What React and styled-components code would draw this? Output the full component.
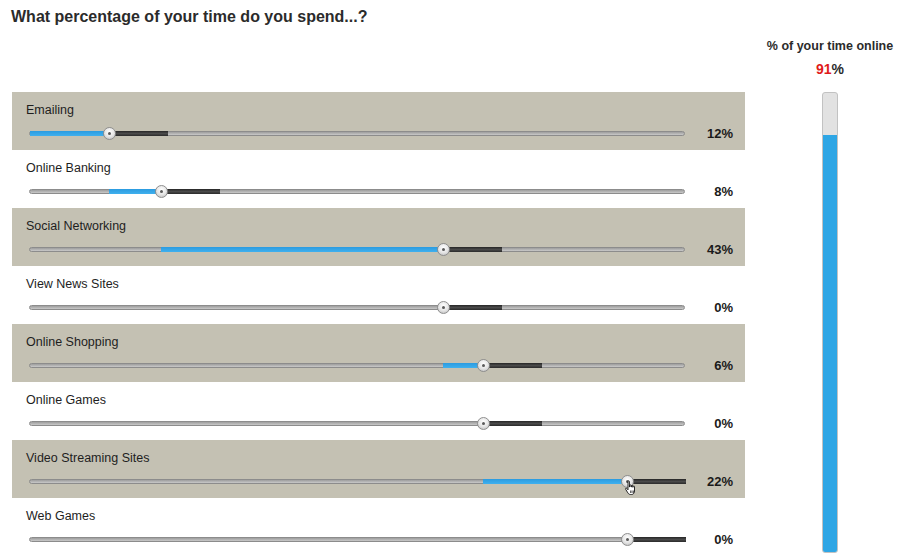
import React from 'react';
import styled, { createGlobalStyle } from 'styled-components';

const GlobalStyle = createGlobalStyle`
  body {
    margin: 0;
    background: #fff;
    font-family: "Liberation Sans", Arial, sans-serif;
    color: #222;
  }
`;

const TRACK = 656;
const SPARE = 9;

const activities = [
  { label: 'Emailing', value: 12 },
  { label: 'Online Banking', value: 8 },
  { label: 'Social Networking', value: 43 },
  { label: 'View News Sites', value: 0 },
  { label: 'Online Shopping', value: 6 },
  { label: 'Online Games', value: 0 },
  { label: 'Video Streaming Sites', value: 22, cursor: true },
  { label: 'Web Games', value: 0 },
];

const Page = styled.div`
  display: flex;
  width: 900px;
  height: 556px;
  overflow: hidden;
`;

const Main = styled.div`
  width: 733px;
  margin-left: 12px;
`;

const Title = styled.h1`
  margin: 0 0 0 -1px;
  height: 92px;
  padding-top: 8px;
  box-sizing: border-box;
  font-size: 16px;
  line-height: 18px;
  font-weight: bold;
  color: #2b2b2b;
`;

const Row = styled.div`
  height: 58px;
  box-sizing: border-box;
  padding: 10px 12px 0 14px;
  background: ${(p) => (p.$shaded ? '#c4c1b3' : '#fff')};
`;

const Label = styled.div`
  font-size: 12.5px;
  line-height: 16px;
  color: #1e1e1e;
`;

const SliderLine = styled.div`
  display: flex;
  align-items: center;
  margin-top: 7px;
  margin-left: 3px;
  height: 16px;
`;

const Track = styled.div`
  position: relative;
  width: ${TRACK}px;
  height: 5px;
  border-radius: 3px;
  box-sizing: border-box;
  border: 1px solid #8c8c8c;
  background: linear-gradient(#9d9d9d, #c9c9c9);
`;

const Segment = styled.div`
  position: absolute;
  top: -1px;
  height: 5px;
  background: ${(p) =>
    p.$kind === 'fill'
      ? 'linear-gradient(#2b9be0, #3fb0ee)'
      : 'linear-gradient(#262626, #4a4a4a 50%, #2a2a2a)'};
`;

const Handle = styled.div`
  position: absolute;
  top: -5px;
  width: 13px;
  height: 13px;
  margin-left: -6px;
  border-radius: 50%;
  box-sizing: border-box;
  border: 1px solid #8e8e8e;
  background: radial-gradient(circle at 50% 35%, #ffffff, #e4e4e4 55%, #b5b5b5);
  display: flex;
  align-items: center;
  justify-content: center;

  &::after {
    content: '';
    width: 3px;
    height: 3px;
    border-radius: 50%;
    background: #5a5a5a;
  }
`;

const CursorSpot = styled.span`
  position: absolute;
  top: 0;
`;

const Cursor = styled.svg`
  display: block;
  margin-left: -3px;
  width: 14px;
  height: 16px;
`;

const Percent = styled.div`
  width: 48px;
  text-align: right;
  font-size: 13px;
  font-weight: bold;
  color: #1a1a1a;
`;

const Side = styled.div`
  width: 140px;
  margin-left: 15px;
  display: flex;
  flex-direction: column;
  align-items: center;
`;

const SideTitle = styled.div`
  margin-top: 39px;
  font-size: 12.5px;
  line-height: 14px;
  font-weight: bold;
  color: #2b2b2b;
`;

const Total = styled.div`
  margin-top: 8px;
  font-size: 14px;
  line-height: 16px;
  font-weight: bold;
  color: #2b2b2b;

  span {
    color: #e01b1b;
  }
`;

const Meter = styled.div`
  margin-top: 15px;
  width: 16px;
  height: 461px;
  box-sizing: border-box;
  border: 1px solid #c2c2c2;
  border-radius: 3px;
  background: #e2e2e2;
  display: flex;
  flex-direction: column;
  justify-content: flex-end;
  overflow: hidden;
`;

const MeterFill = styled.div`
  background: #2ea6e5;
  margin: 0 -1px -1px;
`;

const HandCursor = () => (
  <Cursor viewBox="0 0 14 16">
    <path
      d="M4 1.5c0-.8 1.4-.8 1.4 0V7h.3V5.5c0-.8 1.4-.8 1.4 0V7h.3V6c0-.8 1.4-.8 1.4 0v1.2h.3V6.6c0-.8 1.4-.8 1.4 0V11c0 2-1.2 3.5-3 3.5H6.5c-1.2 0-2-.6-2.6-1.6L1.6 9.2c-.4-.7.5-1.4 1.1-.8L4 9.8z"
      fill="#fff"
      stroke="#111"
      strokeWidth="0.9"
      strokeLinejoin="round"
    />
    <path d="M6.6 10.5v2.5M8 10.5v2.5M9.4 10.5v2.5" stroke="#111" strokeWidth="0.7" />
  </Cursor>
);

const SliderRow = ({ label, value, start, shaded, cursor }) => {
  const px = (p) => (TRACK * p) / 100;
  const end = start + value;
  return (
    <Row $shaded={shaded}>
      <Label>{label}</Label>
      <SliderLine>
        <Track>
          {value > 0 && (
            <Segment $kind="fill" style={{ left: px(start), width: px(value) }} />
          )}
          <Segment $kind="spare" style={{ left: px(end), width: px(SPARE) }} />
          <Handle style={{ left: px(end) }} />
          {cursor && (
            <CursorSpot style={{ left: px(end) }}>
              <HandCursor />
            </CursorSpot>
          )}
        </Track>
        <Percent>{value}%</Percent>
      </SliderLine>
    </Row>
  );
};

const App = () => {
  let running = 0;
  const rows = activities.map((a, i) => {
    const start = running;
    running += a.value;
    return (
      <SliderRow
        key={a.label}
        label={a.label}
        value={a.value}
        start={start}
        shaded={i % 2 === 0}
        cursor={a.cursor}
      />
    );
  });
  const total = running;

  return (
    <>
      <GlobalStyle />
      <Page>
        <Main>
          <Title>What percentage of your time do you spend...?</Title>
          {rows}
        </Main>
        <Side>
          <SideTitle>% of your time online</SideTitle>
          <Total>
            <span>{total}</span>%
          </Total>
          <Meter>
            <MeterFill style={{ height: `${total}%` }} />
          </Meter>
        </Side>
      </Page>
    </>
  );
};

export default App;
